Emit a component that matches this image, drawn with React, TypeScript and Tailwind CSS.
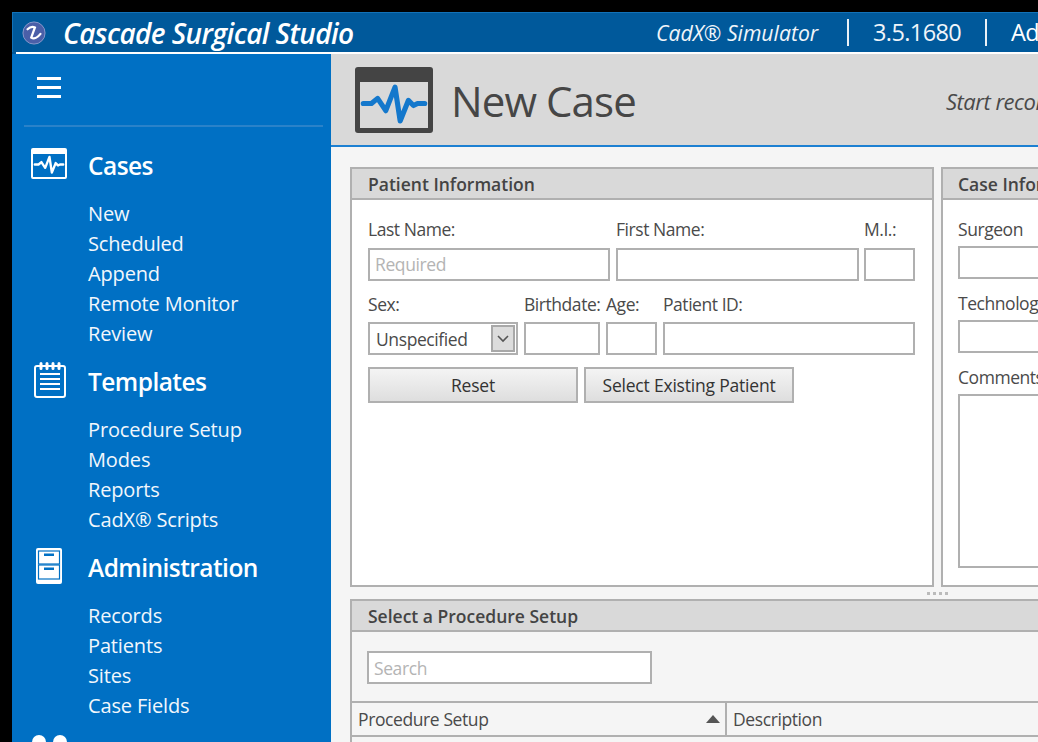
import { ReactNode } from "react";

const font = { fontFamily: '"Open Sans", "Noto Sans", sans-serif' };

function Pulse({ className, width = 3 }: { className?: string; width?: number }) {
  return (
    <svg viewBox="0 0 64 40" className={className} fill="none">
      <path
        d="M2 20H10L16 15L24 27L33 4L38 37L46 17L51 22L55 20H62"
        stroke="currentColor"
        strokeWidth={width}
        strokeLinecap="round"
        strokeLinejoin="round"
      />
    </svg>
  );
}

function NavGroup({
  icon,
  title,
  items,
  className,
}: {
  icon: ReactNode;
  title: string;
  items: string[];
  className: string;
}) {
  return (
    <div className={className}>
      <div className="flex h-[40px] items-center">
        <div className="-mt-[5px] flex w-[76px] justify-start pl-[18px]">{icon}</div>
        <span className="text-[24.5px] font-semibold tracking-[-0.55px] text-white">{title}</span>
      </div>
      <div className="mt-[13px] pl-[76px]">
        {items.map((item) => (
          <div key={item} className="h-[30px] text-[20px] leading-[30px] tracking-[-0.15px] text-[#f2f7fc]">
            {item}
          </div>
        ))}
      </div>
    </div>
  );
}

function Field({
  label,
  className,
  placeholder,
  labelHeight = "h-[31px]",
  labelClass = "leading-[24px]",
}: {
  label: string;
  className: string;
  placeholder?: string;
  labelHeight?: string;
  labelClass?: string;
}) {
  return (
    <div className={className}>
      <div className={`${labelHeight} ${labelClass} whitespace-nowrap text-[17.5px] tracking-[-0.45px] text-[#4a4a4a]`}>{label}</div>
      <div className="h-[33px] border-2 border-[#b0b0b0] bg-white pl-[5px] text-[17.5px] leading-[29px] tracking-[-0.4px] text-[#b4b4b4]">
        {placeholder}
      </div>
    </div>
  );
}

function PanelHeader({ title, inset = "pl-[15px]" }: { title: string; inset?: string }) {
  return (
    <div className={`${inset} h-[31px] whitespace-nowrap border-b-2 border-[#b0b0b0] bg-[#d9d9d9] text-[17.5px] font-semibold leading-[30px] text-[#444]`}>
      {title}
    </div>
  );
}

export default function App() {
  return (
    <div className="h-[742px] w-[1038px] overflow-hidden bg-black pl-[12px] pt-[12px]" style={font}>
      <div className="w-[1026px] overflow-hidden">
        {/* title bar */}
        <div className="bg-[#00599b]">
          <div className="flex h-[40px] items-center whitespace-nowrap border-t border-l border-[#1272b8] text-white">
            <svg viewBox="0 0 26 26" className="ml-[9px] h-[24px] w-[24px] shrink-0">
              <circle cx="13" cy="13" r="12" fill="#4a5fa8" />
              <circle cx="13" cy="13" r="12" fill="none" stroke="#8d9ccc" strokeWidth="1" />
              <path d="M6 9c3-3 6-3 8-2l-4 11c3 2 7 0 10-4" fill="none" stroke="#fff" strokeWidth="2.4" strokeLinecap="round" />
            </svg>
            <span className="ml-[17px] w-[593px] shrink-0 text-[28px] font-semibold italic tracking-[-0.6px]">Cascade Surgical Studio</span>
            <span className="w-[191px] shrink-0 text-[21.2px] italic text-[#f0f5fa]">CadX® Simulator</span>
            <span className="h-[27px] w-[2px] shrink-0 bg-[#eaf1f7]" />
            <span className="ml-[24px] w-[112px] shrink-0 text-[23.5px] tracking-[-0.6px] text-[#f0f5fa]">3.5.1680</span>
            <span className="h-[27px] w-[2px] shrink-0 bg-[#eaf1f7]" />
            <span className="ml-[24px] shrink-0 text-[23.5px] tracking-[-0.6px]">Administrator</span>
          </div>
          <div className="ml-[4px] h-[2px] bg-white" />
        </div>

        <div className="flex h-[688px]">
          {/* sidebar */}
          <aside className="w-[319px] shrink-0 overflow-hidden bg-[#0070c4]">
            <div className="pl-[25px] pt-[23px]">
              <div className="flex w-[24px] flex-col gap-[6px]">
                <span className="h-[3px] bg-white" />
                <span className="h-[3px] bg-white" />
                <span className="h-[3px] bg-white" />
              </div>
            </div>
            <div className="ml-[12px] mt-[27px] h-[2px] w-[299px] bg-[#2a82c9]" />
            <NavGroup
              className="mt-[19px]"
              title="Cases"
              items={["New", "Scheduled", "Append", "Remote Monitor", "Review"]}
              icon={
                <div className="ml-[1px] flex h-[31px] w-[36px] flex-col rounded-[2px] border-2 border-t-[6px] border-white text-white">
                  <Pulse className="mt-[1px] h-[19px] w-full" width={5} />
                </div>
              }
            />
            <NavGroup
              className="mt-[13px]"
              title="Templates"
              items={["Procedure Setup", "Modes", "Reports", "CadX® Scripts"]}
              icon={
                <svg viewBox="0 0 32 36" className="ml-[4px] h-[36px] w-[32px] text-white" fill="none" stroke="currentColor">
                  <rect x="1" y="4" width="30" height="31" rx="2" strokeWidth="2" />
                  <path d="M7 1.5v5M13 1.5v5M19 1.5v5M25 1.5v5" strokeWidth="3" strokeLinecap="round" />
                  <path d="M6 12h20M6 17h20M6 22h20M6 27h20" strokeWidth="2" />
                </svg>
              }
            />
            <NavGroup
              className="mt-[13px]"
              title="Administration"
              items={["Records", "Patients", "Sites", "Case Fields"]}
              icon={
                <svg viewBox="0 0 26 36" className="ml-[6px] h-[36px] w-[26px]">
                  <rect x="0" y="0" width="26" height="36" rx="2" fill="#fff" />
                  <rect x="2.5" y="3" width="21" height="13" fill="#fff" stroke="#0070c4" strokeWidth="1.2" />
                  <rect x="2.5" y="17" width="21" height="14" fill="#fff" stroke="#0070c4" strokeWidth="1.2" />
                  <rect x="8" y="5.5" width="10" height="2.5" fill="#0070c4" />
                  <rect x="8" y="19.5" width="10" height="2.5" fill="#0070c4" />
                </svg>
              }
            />
            <div className="ml-[20px] mt-[14px] flex gap-[7px]">
              <span className="h-[14px] w-[14px] rounded-full bg-white" />
              <span className="h-[14px] w-[14px] rounded-full bg-white" />
            </div>
          </aside>

          {/* main */}
          <main className="w-[707px] shrink-0 overflow-hidden bg-[#f5f5f5]">
            <div className="flex h-[93px] w-[1100px] items-center border-b-2 border-[#1d80d2] bg-[#d9d9d9] pl-[24px]">
              <div className="flex h-[66px] w-[78px] flex-col rounded-[3px] border-[5px] border-t-[15px] border-[#444] bg-[#d9d9d9] text-[#1478cc]">
                <Pulse className="mt-[1px] h-[41px] w-full" width={5} />
              </div>
              <h1 className="ml-[18px] mt-[3px] w-[495px] text-[42px] leading-none tracking-[-0.9px] text-[#464646]">New Case</h1>
              <span className="mt-[3px] whitespace-nowrap text-[22px] italic tracking-[-0.5px] text-[#4a4a4a]">Start recording a new case</span>
            </div>

            <div className="w-[1100px] pl-[19px] pt-[20px]">
              <div className="flex h-[420px] gap-[7px]">
                <section className="w-[584px] shrink-0 border-2 border-[#b0b0b0] bg-white">
                  <PanelHeader title="Patient Information" inset="pl-[16px]" />
                  <div className="pl-[16px] pt-[17px]">
                    <div className="flex gap-[6px]">
                      <Field label="Last Name:" placeholder="Required" className="w-[242px]" />
                      <Field label="First Name:" className="w-[243px]" />
                      <Field label="M.I.:" className="-ml-[1px] w-[51px]" />
                    </div>
                    <div className="mt-[10px] flex gap-[6px]">
                      <div className="w-[150px]">
                        <div className="h-[31px] text-[17.5px] leading-[26px] tracking-[-0.45px] text-[#4a4a4a]">Sex:</div>
                        <div className="flex h-[33px] items-center justify-between border-2 border-[#b0b0b0] bg-white pl-[6px] pr-[1px] text-[17.5px] tracking-[-0.4px] text-[#4a4a4a]">
                          <span className="pt-[1px]">Unspecified</span>
                          <span className="flex h-[27px] w-[24px] items-center justify-center border-2 border-[#a8a8a8] bg-[#dcdcdc]">
                            <svg viewBox="0 0 12 8" className="h-[8px] w-[12px]" fill="none" stroke="#555" strokeWidth="1.6">
                              <path d="M1 1l5 5 5-5" />
                            </svg>
                          </span>
                        </div>
                      </div>
                      <Field label="Birthdate:" labelClass="leading-[26px]" className="w-[76px]" />
                      <Field label="Age:" labelClass="leading-[26px]" className="w-[51px]" />
                      <Field label="Patient ID:" labelClass="leading-[26px]" className="w-[252px]" />
                    </div>
                    <div className="mt-[12px] flex gap-[6px]">
                      <button className="h-[36px] w-[210px] border-2 border-[#b0b0b0] bg-gradient-to-b from-[#f4f4f4] to-[#dedede] text-[17.5px] tracking-[-0.2px] text-[#333]">
                        Reset
                      </button>
                      <button className="h-[36px] w-[210px] border-2 border-[#b0b0b0] bg-gradient-to-b from-[#f4f4f4] to-[#dedede] text-[17.5px] tracking-[-0.2px] text-[#333]">
                        Select Existing Patient
                      </button>
                    </div>
                  </div>
                </section>

                <section className="w-[400px] shrink-0 border-2 border-[#b0b0b0] bg-white">
                  <PanelHeader title="Case Information" />
                  <div className="pl-[15px] pt-[17px]">
                    <Field label="Surgeon" labelHeight="h-[29px]" className="w-[360px]" />
                    <Field label="Technologist" labelHeight="h-[29px]" className="mt-[12px] w-[360px]" />
                    <div className="mt-[12px] h-[29px] text-[17.5px] leading-[24px] tracking-[-0.45px] text-[#4a4a4a]">Comments</div>
                    <div className="h-[174px] w-[360px] border-2 border-[#b0b0b0] bg-white" />
                  </div>
                </section>
              </div>

              <div className="flex h-[12px] items-center gap-[3px] pl-[577px]">
                <span className="h-[3px] w-[3px] bg-[#bbb]" />
                <span className="h-[3px] w-[3px] bg-[#bbb]" />
                <span className="h-[3px] w-[3px] bg-[#bbb]" />
                <span className="h-[3px] w-[3px] bg-[#bbb]" />
              </div>

              <section className="h-[201px] border-2 border-[#b0b0b0] bg-[#f5f5f5]">
                <PanelHeader title="Select a Procedure Setup" inset="pl-[16px]" />
                <div className="h-[69px] pl-[15px] pt-[19px]">
                  <div className="h-[33px] w-[285px] border-2 border-[#b0b0b0] bg-white pl-[5px] text-[17.5px] leading-[30px] tracking-[-0.4px] text-[#b4b4b4]">
                    Search
                  </div>
                </div>
                <div className="flex h-[36px] border-y-2 border-[#b0b0b0] text-[17.5px] leading-[32px] tracking-[-0.4px] text-[#4a4a4a]">
                  <div className="flex w-[375px] items-center justify-between border-r-2 border-[#b0b0b0] pl-[6px] pr-[5px]">
                    Procedure Setup
                    <span className="h-0 w-0 border-x-[7px] border-b-[8px] border-x-transparent border-b-[#555]" />
                  </div>
                  <div className="pl-[6px]">Description</div>
                </div>
              </section>
            </div>
          </main>
        </div>
      </div>
    </div>
  );
}
